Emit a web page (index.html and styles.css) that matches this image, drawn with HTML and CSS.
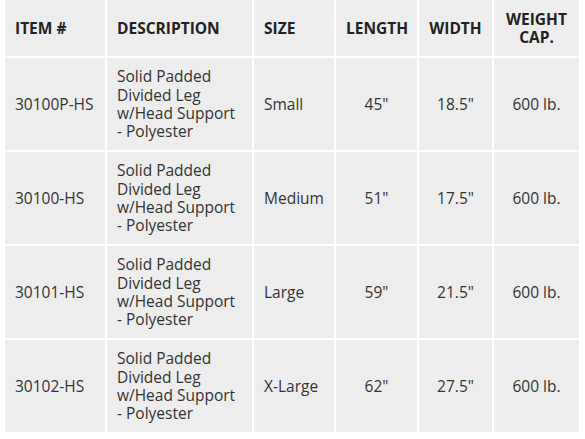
FILE: index.html
```html
<!DOCTYPE html>
<html>
<head>
<meta charset="utf-8">
<link rel="stylesheet" href="styles.css">
</head>
<body>
<table class="specs">
  <colgroup>
    <col class="c-item"><col class="c-desc"><col class="c-size"><col class="c-len"><col class="c-wid"><col class="c-cap">
  </colgroup>
  <thead>
    <tr>
      <th>ITEM #</th>
      <th>DESCRIPTION</th>
      <th>SIZE</th>
      <th class="ctr">LENGTH</th>
      <th class="ctr">WIDTH</th>
      <th class="ctr">WEIGHT CAP.</th>
    </tr>
  </thead>
  <tbody>
    <tr>
      <td>30100P-HS</td>
      <td>Solid Padded Divided Leg w/Head Support - Polyester</td>
      <td>Small</td>
      <td class="ctr">45"</td>
      <td class="ctr">18.5"</td>
      <td class="ctr">600 lb.</td>
    </tr>
    <tr>
      <td>30100-HS</td>
      <td>Solid Padded Divided Leg w/Head Support - Polyester</td>
      <td>Medium</td>
      <td class="ctr">51"</td>
      <td class="ctr">17.5"</td>
      <td class="ctr">600 lb.</td>
    </tr>
    <tr>
      <td>30101-HS</td>
      <td>Solid Padded Divided Leg w/Head Support - Polyester</td>
      <td>Large</td>
      <td class="ctr">59"</td>
      <td class="ctr">21.5"</td>
      <td class="ctr">600 lb.</td>
    </tr>
    <tr>
      <td>30102-HS</td>
      <td>Solid Padded Divided Leg w/Head Support - Polyester</td>
      <td>X-Large</td>
      <td class="ctr">62"</td>
      <td class="ctr">27.5"</td>
      <td class="ctr">600 lb.</td>
    </tr>
  </tbody>
</table>
</body>
</html>
```
FILE: styles.css
```css
html, body {
  margin: 0;
  padding: 0;
  background: #fff;
}
.specs {
  margin: -2px 0 0 3px;
  border-collapse: separate;
  border-spacing: 2px;
  table-layout: fixed;
  width: 576px;
  font-family: "Open Sans", "Noto Sans", sans-serif;
  font-size: 15.5px;
  line-height: 18.4px;
  color: #333;
}
.c-item { width: 100px; }
.c-desc { width: 145px; }
.c-size { width: 80px; }
.c-len { width: 81px; }
.c-wid { width: 73px; }
.c-cap { width: 85px; }
.specs th,
.specs td {
  background: #ededed;
  padding: 9px 10px;
  text-align: left;
  vertical-align: middle;
}
.specs th {
  font-weight: 700;
  color: #222;
  height: 38px;
}
.specs td {
  height: 74px;
}
.specs .ctr {
  text-align: center;
}
```
